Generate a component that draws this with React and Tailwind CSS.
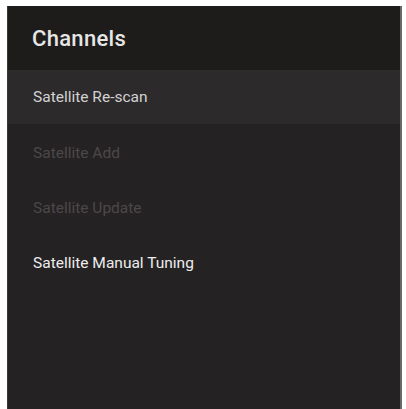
export default function App() {
  const items = [
    { label: "Satellite Re-scan", state: "selected" },
    { label: "Satellite Add", state: "disabled" },
    { label: "Satellite Update", state: "disabled" },
    { label: "Satellite Manual Tuning", state: "normal" },
  ];
  return (
    <div className="w-[406px] h-[409px] bg-white pt-[6px] pl-[7px] pr-[4px] overflow-hidden" style={{ fontFamily: "Roboto, 'Noto Sans', sans-serif" }}>
      <div className="h-full bg-[#252223] border-l border-[#3a3838] border-r-2 border-r-[#6a6868] flex flex-col">
        <div className="h-[64px] bg-[#1e1b1b] flex items-center pl-[24px] pt-[1px]">
          <span className="text-[22px] font-medium text-[#e6e6e6] tracking-[0.3px]">Channels</span>
        </div>
        <div className="flex flex-col">
          {items.map((it) => (
            <div
              key={it.label}
              className={
                it.state === "selected"
                  ? "h-[54px] flex items-center pl-[25px] pt-[1px] bg-[#2d2a2c]"
                  : "h-[55px] flex items-center pl-[25px] pt-[4px]"
              }
            >
              <span
                className={
                  it.state === "selected"
                    ? "text-[15.5px] text-[#d2d2d2]"
                    : it.state === "disabled"
                    ? "text-[15.5px] text-[#4b4849]"
                    : "text-[15.5px] text-[#ededed]"
                }
              >
                {it.label}
              </span>
            </div>
          ))}
        </div>
      </div>
    </div>
  );
}
